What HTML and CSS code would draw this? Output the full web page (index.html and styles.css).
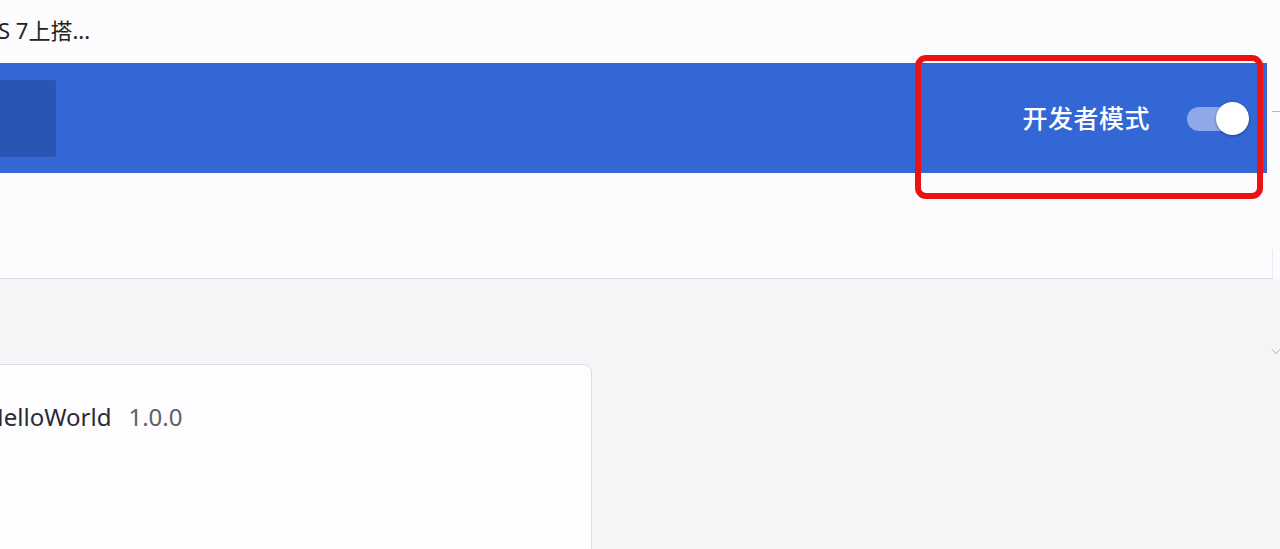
FILE: index.html
```html
<!DOCTYPE html>
<html lang="zh-CN">
<head>
<meta charset="utf-8">
<title>扩展程序</title>
<link rel="stylesheet" href="styles.css">
</head>
<body>
<div class="topbar"><span class="tab-title">S 7上搭...</span></div>
<div class="headrow">
  <header class="header">
    <div class="logo-block"></div>
    <div class="dev-mode">
      <span class="dev-label">开发者模式</span>
      <span class="toggle"><span class="track"></span><span class="knob"></span></span>
    </div>
  </header>
  <div class="rail"><span class="rail-line"></span></div>
  <div class="annotation"></div>
</div>
<div class="subbar"><div class="subbar-fill"></div><div class="subbar-rail"></div></div>
<main class="content">
  <section class="card">
    <div class="card-title"><span class="name">HelloWorld</span><span class="version">1.0.0</span></div>
  </section>
  <span class="chev"></span>
</main>
</body>
</html>
```

FILE: styles.css
```css
* { box-sizing: border-box; }
html, body { margin: 0; padding: 0; }
body {
  width: 1280px;
  height: 549px;
  overflow: hidden;
  background: #f5f4f7;
  font-family: "Noto Sans", "Noto Sans CJK SC", sans-serif;
}
.topbar {
  height: 63px;
  background: #fcfbfd;
  display: flex;
  align-items: center;
}
.tab-title {
  font-size: 22px;
  color: #222;
  margin-left: -2px;
  margin-top: -5px;
  font-family: "Noto Sans", "Noto Sans CJK SC", sans-serif;
}
.headrow {
  position: relative;
  display: flex;
  height: 110px;
}
.header {
  width: 1267px;
  height: 110px;
  background: #3367d6;
  display: flex;
  align-items: center;
  justify-content: space-between;
  padding-right: 18px;
}
.logo-block {
  width: 56px;
  height: 77px;
  background: #2b55b5;
  border-radius: 0 2px 2px 0;
}
.dev-mode {
  display: flex;
  align-items: center;
  gap: 37px;
}
.dev-label {
  color: #ffffff;
  font-size: 25px;
  font-family: "Noto Sans CJK SC", sans-serif;
  font-weight: 500;
  letter-spacing: 0.5px;
  margin-top: -2px;
}
.toggle {
  position: relative;
  width: 62px;
  height: 33px;
  display: block;
}
.track {
  position: absolute;
  left: 0;
  top: 5px;
  width: 54px;
  height: 24px;
  border-radius: 12px;
  background: #8fa9e8;
}
.knob {
  position: absolute;
  right: 0;
  top: 0;
  width: 33px;
  height: 33px;
  border-radius: 50%;
  background: #ffffff;
  box-shadow: 0 1px 3px rgba(0,0,0,0.35);
}
.rail {
  flex: 1;
  background: #fcfbfd;
  position: relative;
}
.rail-line {
  position: absolute;
  left: 5px;
  right: 0;
  top: 48px;
  height: 1px;
  background: #b9b9bd;
}
.annotation {
  position: absolute;
  left: 915px;
  top: -8px;
  width: 348px;
  height: 144px;
  border: 6px solid #ee1111;
  border-radius: 11px;
}
.subbar {
  display: flex;
  height: 106px;
  background: #fcfbfd;
}
.subbar-fill {
  width: 1272px;
  border-bottom: 1px solid #dcdbe0;
}
.subbar-rail {
  flex: 1;
  border-left: 1px solid #ecebef;
  margin-top: 77px;
}
.content {
  position: relative;
  padding-top: 85px;
  height: 270px;
}
.card {
  width: 592px;
  height: 200px;
  background: #fdfcfe;
  border: 1px solid #dddce1;
  border-left: none;
  border-radius: 0 9px 0 0;
  padding-top: 35px;
}
.card-title {
  display: flex;
  align-items: baseline;
  font-size: 24px;
}
.name {
  color: #2c2a33;
  margin-left: -14px;
}
.version {
  color: #5f6066;
  margin-left: 17px;
}
.chev {
  position: absolute;
  left: 1273px;
  top: 68px;
  width: 6px;
  height: 6px;
  border-right: 1px solid #c8c8cc;
  border-bottom: 1px solid #c8c8cc;
  transform: rotate(45deg);
}
```
